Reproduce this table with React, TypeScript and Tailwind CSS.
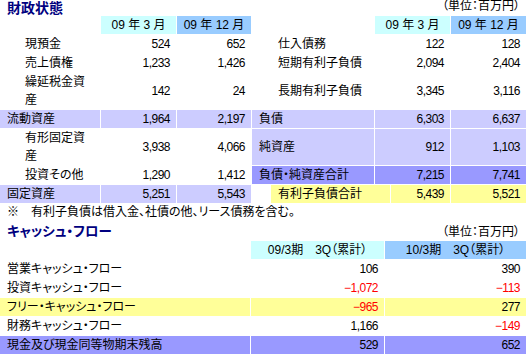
import type { ReactNode } from 'react';

const CYAN = 'bg-[#ccffff]';
const SKY = 'bg-[#99ccff]';
const LAV = 'bg-[#ccccff]';
const PERI = 'bg-[#9999ff]';
const YEL = 'bg-[#ffff99]';

type Kind = 'lab' | 'rlab' | 'sum' | 'num' | 'head' | 'blank';

const kindClass: Record<Kind, string> = {
  lab: 'pl-[25px] pr-[6px]',
  rlab: 'pl-[26px] pr-[6px]',
  sum: 'pl-[7px]',
  num: 'justify-end pr-[6px] tracking-[-0.5px]',
  head: 'justify-center',
  blank: '',
};

const Cell = ({ kind, bg = '', red, children }: { kind: Kind; bg?: string; red?: boolean; children?: ReactNode }) => (
  <div className={`flex items-center min-h-[18px] ${kindClass[kind]} ${bg} ${red ? 'text-[#ff0000]' : ''}`}>
    {children}
  </div>
);

// 財政状態: 左 = 資産, 右 = 負債・純資産
const balance: { l: string[]; r: string[]; lbg?: string; rbg?: string; lsum?: boolean; rsum?: boolean }[] = [
  { l: ['現預金', '524', '652'], r: ['仕入債務', '122', '128'] },
  { l: ['売上債権', '1,233', '1,426'], r: ['短期有利子負債', '2,094', '2,404'] },
  { l: ['繰延税金資産', '142', '24'], r: ['長期有利子負債', '3,345', '3,116'] },
  { l: ['流動資産', '1,964', '2,197'], r: ['負債', '6,303', '6,637'], lbg: LAV, rbg: LAV, lsum: true, rsum: true },
  { l: ['有形固定資産', '3,938', '4,066'], r: ['純資産', '912', '1,103'], rbg: LAV, rsum: true },
  { l: ['投資その他', '1,290', '1,412'], r: ['負債・純資産合計', '7,215', '7,741'], rbg: PERI, rsum: true },
];

const cashflow: { label: string; a: string; b: string; bg?: string }[] = [
  { label: '営業キャッシュ・フロー', a: '106', b: '390' },
  { label: '投資キャッシュ・フロー', a: '-1,072', b: '-113' },
  { label: 'フリー・キャッシュ・フロー', a: '-965', b: '277', bg: YEL },
  { label: '財務キャッシュ・フロー', a: '1,166', b: '-149' },
  { label: '現金及び現金同等物期末残高', a: '529', b: '652', bg: PERI },
];

const isNeg = (v: string) => v.startsWith('-');

export default function App() {
  return (
    <div className="w-[526px] h-[354px] overflow-hidden bg-white text-black text-[12px] leading-[18px] [font-family:'Liberation_Sans','Noto_Sans_CJK_JP',sans-serif] [font-feature-settings:'palt']">
      <div className="flex h-[16px] items-start justify-between">
        <span className="pl-[7px] text-[14px] font-bold leading-[16px] text-[#000080]">財政状態</span>
        <span className="pr-[6px] leading-[12px]">（単位：百万円）</span>
      </div>

      <div className="grid grid-cols-[100px_75px_74px_122px_75px_75px] gap-px">
        <Cell kind="blank" />
        <Cell kind="head" bg={CYAN}>09 年 3 月</Cell>
        <Cell kind="head" bg={SKY}>09 年 12 月</Cell>
        <Cell kind="blank" />
        <Cell kind="head" bg={CYAN}>09 年 3 月</Cell>
        <Cell kind="head" bg={SKY}>09 年 12 月</Cell>

        {balance.map(row => (
          <div key={row.l[0]} className="contents">
            <Cell kind={row.lsum ? 'sum' : 'lab'} bg={row.lbg}>{row.l[0]}</Cell>
            <Cell kind="num" bg={row.lbg}>{row.l[1]}</Cell>
            <Cell kind="num" bg={row.lbg}>{row.l[2]}</Cell>
            <Cell kind={row.rsum ? 'sum' : 'rlab'} bg={row.rbg}>{row.r[0]}</Cell>
            <Cell kind="num" bg={row.rbg}>{row.r[1]}</Cell>
            <Cell kind="num" bg={row.rbg}>{row.r[2]}</Cell>
          </div>
        ))}

        <Cell kind="sum" bg={LAV}>固定資産</Cell>
        <Cell kind="num" bg={LAV}>5,251</Cell>
        <Cell kind="num" bg={LAV}>5,543</Cell>
        <div className="col-span-3 grid grid-cols-[18px_119px_59px_75px] gap-px">
          <Cell kind="blank" />
          <Cell kind="sum" bg={YEL}>有利子負債合計</Cell>
          <Cell kind="num" bg={YEL}>5,439</Cell>
          <Cell kind="num" bg={YEL}>5,521</Cell>
        </div>
      </div>

      <div className="h-[19px] pl-[7px] leading-[19px]">※　有利子負債は借入金、社債の他、リース債務を含む。</div>

      <div className="flex h-[19px] items-center justify-between">
        <span className="pl-[7px] text-[13.5px] font-bold leading-[19px] text-[#000080]">キャッシュ・フロー</span>
        <span className="pr-[6px] leading-[12px]">（単位：百万円）</span>
      </div>

      <div className="grid grid-cols-[250px_133px_141px] gap-px">
        <Cell kind="blank" />
        <Cell kind="head" bg={CYAN}>09/3期　3Q（累計）</Cell>
        <Cell kind="head" bg={SKY}>10/3期　3Q（累計）</Cell>
        {cashflow.map(row => (
          <div key={row.label} className="contents">
            <Cell kind="sum" bg={row.bg}>{row.label}</Cell>
            <Cell kind="num" bg={row.bg} red={isNeg(row.a)}>{row.a.replace('-', '−')}</Cell>
            <Cell kind="num" bg={row.bg} red={isNeg(row.b)}>{row.b.replace('-', '−')}</Cell>
          </div>
        ))}
      </div>
    </div>
  );
}
